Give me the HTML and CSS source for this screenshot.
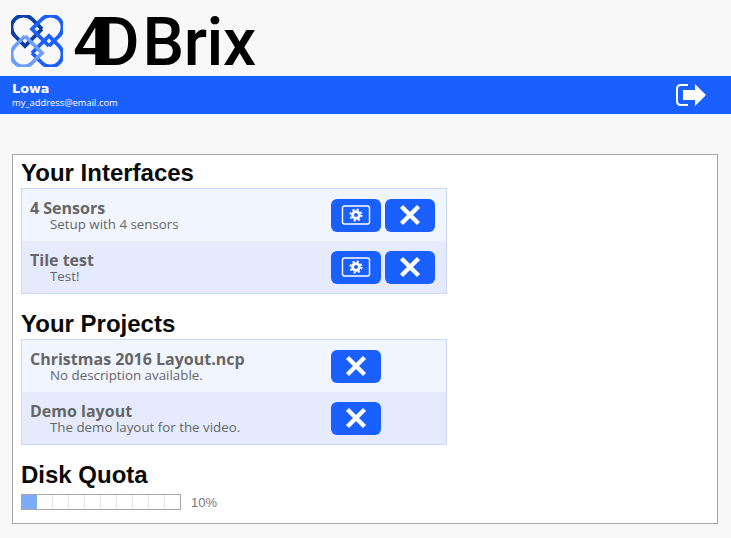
FILE: index.html
```html
<!DOCTYPE html>
<html lang="en">
<head>
    <meta charset="UTF-8">
    <meta name="viewport" content="width=device-width, initial-scale=1.0">
    <title>4DBrix</title>
    <link rel="stylesheet" href="styles.css">
</head>
<body>

<div class="logo-bar">
    <svg class="logo-mark" width="52" height="52" viewBox="-26 -26 52 52" fill="none" stroke-width="3.8">
        <defs>
            <path id="knot" d="M5 -12 L-5 -22 A12 12 0 0 0 -22 -5 L-12 5 L5 -12"/>
        </defs>
        <use href="#knot" stroke="#0b3fa8"/>
        <use href="#knot" stroke="#1a5fff" transform="rotate(90)"/>
        <use href="#knot" stroke="#1a5fff" transform="rotate(180)"/>
        <use href="#knot" stroke="#6f9dff" transform="rotate(270)"/>
    </svg>
    <div class="logo-text"><span class="logo-4">4</span><span class="logo-d">D</span>Brix</div>
</div>

<div class="user-bar">
    <div class="user-info">
        <div class="user-name">Lowa</div>
        <div class="user-mail">my_address@email.com</div>
    </div>
    <svg class="logout" width="32" height="26" viewBox="0 0 32 26">
        <path d="M13 3 H6 Q2 3 2 7 V19 Q2 23 6 23 H13" fill="none" stroke="#fff" stroke-width="2"/>
        <path d="M8 8 H20 V2 L31 13 L20 24 V18 H8 Z" fill="#fff"/>
    </svg>
</div>

<div class="panel">
    <h2>Your Interfaces</h2>
    <div class="list">
        <div class="row">
            <div class="row-text">
                <div class="row-name">4 Sensors</div>
                <div class="row-desc">Setup with 4 sensors</div>
            </div>
            <button class="btn">
                <svg width="32" height="22" viewBox="0 0 32 22" fill="none" stroke="#fff">
                    <rect x="2.5" y="2" width="27" height="18" rx="2" stroke-width="1.4"/>
                    <circle cx="16" cy="11" r="3.4" stroke-width="2.8"/>
                    <circle cx="16" cy="11" r="5.6" stroke-width="1.8" stroke-dasharray="2.2 2.2"/>
                </svg>
            </button>
            <button class="btn">
                <svg width="24" height="24" viewBox="0 0 24 24"><path d="M3.5 3.5 L20.5 20.5 M20.5 3.5 L3.5 20.5" stroke="#fff" stroke-width="4.4"/></svg>
            </button>
        </div>
        <div class="row">
            <div class="row-text">
                <div class="row-name">Tile test</div>
                <div class="row-desc">Test!</div>
            </div>
            <button class="btn">
                <svg width="32" height="22" viewBox="0 0 32 22" fill="none" stroke="#fff">
                    <rect x="2.5" y="2" width="27" height="18" rx="2" stroke-width="1.4"/>
                    <circle cx="16" cy="11" r="3.4" stroke-width="2.8"/>
                    <circle cx="16" cy="11" r="5.6" stroke-width="1.8" stroke-dasharray="2.2 2.2"/>
                </svg>
            </button>
            <button class="btn">
                <svg width="24" height="24" viewBox="0 0 24 24"><path d="M3.5 3.5 L20.5 20.5 M20.5 3.5 L3.5 20.5" stroke="#fff" stroke-width="4.4"/></svg>
            </button>
        </div>
    </div>

    <h2>Your Projects</h2>
    <div class="list">
        <div class="row">
            <div class="row-text">
                <div class="row-name">Christmas 2016 Layout.ncp</div>
                <div class="row-desc">No description available.</div>
            </div>
            <button class="btn">
                <svg width="24" height="24" viewBox="0 0 24 24"><path d="M3.5 3.5 L20.5 20.5 M20.5 3.5 L3.5 20.5" stroke="#fff" stroke-width="4.4"/></svg>
            </button>
            <div class="btn-space"></div>
        </div>
        <div class="row">
            <div class="row-text">
                <div class="row-name">Demo layout</div>
                <div class="row-desc">The demo layout for the video.</div>
            </div>
            <button class="btn">
                <svg width="24" height="24" viewBox="0 0 24 24"><path d="M3.5 3.5 L20.5 20.5 M20.5 3.5 L3.5 20.5" stroke="#fff" stroke-width="4.4"/></svg>
            </button>
            <div class="btn-space"></div>
        </div>
    </div>

    <h2>Disk Quota</h2>
    <div class="quota">
        <div class="quota-bar">
            <div class="seg used"></div>
            <div class="seg"></div>
            <div class="seg"></div>
            <div class="seg"></div>
            <div class="seg"></div>
            <div class="seg"></div>
            <div class="seg"></div>
            <div class="seg"></div>
            <div class="seg"></div>
            <div class="seg"></div>
        </div>
        <span class="quota-label">10%</span>
    </div>
</div>

</body>
</html>
```

FILE: styles.css
```css
body {
    margin: 0;
    background-color: #f8f8f8;
    font-family: "Open Sans", sans-serif;
}

.logo-bar {
    height: 76px;
    display: flex;
    align-items: flex-start;
    padding: 15px 0 0 11px;
    box-sizing: border-box;
}

.logo-text {
    margin-left: 10px;
    font-family: Roboto, sans-serif;
    font-size: 66px;
    font-weight: 500;
    line-height: 56px;
    color: #000;
    letter-spacing: -0.5px;
}

.logo-4 {
    letter-spacing: -14px;
}

.logo-d {
    letter-spacing: 3px;
}

.user-bar {
    height: 38px;
    background-color: #1a5fff;
    color: #fff;
    display: flex;
    justify-content: space-between;
    align-items: center;
    padding: 0 24px 0 12px;
}

.user-name {
    font-family: "DejaVu Sans", sans-serif;
    font-size: 12.8px;
    font-weight: bold;
    line-height: 15px;
}

.user-mail {
    font-size: 9.4px;
    line-height: 13px;
}

.panel {
    margin: 40px 13px 0 12px;
    height: 370px;
    box-sizing: border-box;
    border: 1px solid #a6a6a6;
    background-color: #fff;
    padding: 4px 8px;
}

h2 {
    margin: 0 0 1px;
    font-family: "Liberation Sans", Arial, sans-serif;
    font-size: 24px;
    font-weight: bold;
    line-height: 28px;
    color: #0a0a0a;
}

.list {
    width: 426px;
    box-sizing: border-box;
    border: 1px solid #c8d9fb;
    margin-bottom: 16px;
}

.row {
    height: 52px;
    display: flex;
    align-items: center;
    gap: 4px;
    padding: 0 11px 0 8px;
    background-color: #f1f5ff;
}

.row + .row {
    background-color: #e5ebfd;
}

.row-text {
    flex: 1;
    color: #666;
}

.row-name {
    font-size: 16px;
    font-weight: bold;
    line-height: 18px;
}

.row-desc {
    font-size: 13.33px;
    line-height: 15px;
    padding-left: 20px;
}

.btn {
    width: 50px;
    height: 33px;
    padding: 0;
    border: none;
    border-radius: 6px;
    background-color: #1a5fff;
    display: flex;
    align-items: center;
    justify-content: center;
}

.btn-space {
    width: 50px;
}

.quota {
    display: flex;
    align-items: center;
    gap: 10px;
    margin-top: 5px;
}

.quota-bar {
    width: 160px;
    height: 16px;
    box-sizing: border-box;
    border: 1px solid #a6a6a6;
    display: flex;
}

.seg {
    flex: 1;
    border-right: 1px solid #e6e6e6;
}

.seg:last-child {
    border-right: none;
}

.seg.used {
    background-color: #7eabf8;
    border-right: none;
}

.quota-label {
    font-family: "Liberation Sans", Arial, sans-serif;
    font-size: 13px;
    color: #777;
}
```
